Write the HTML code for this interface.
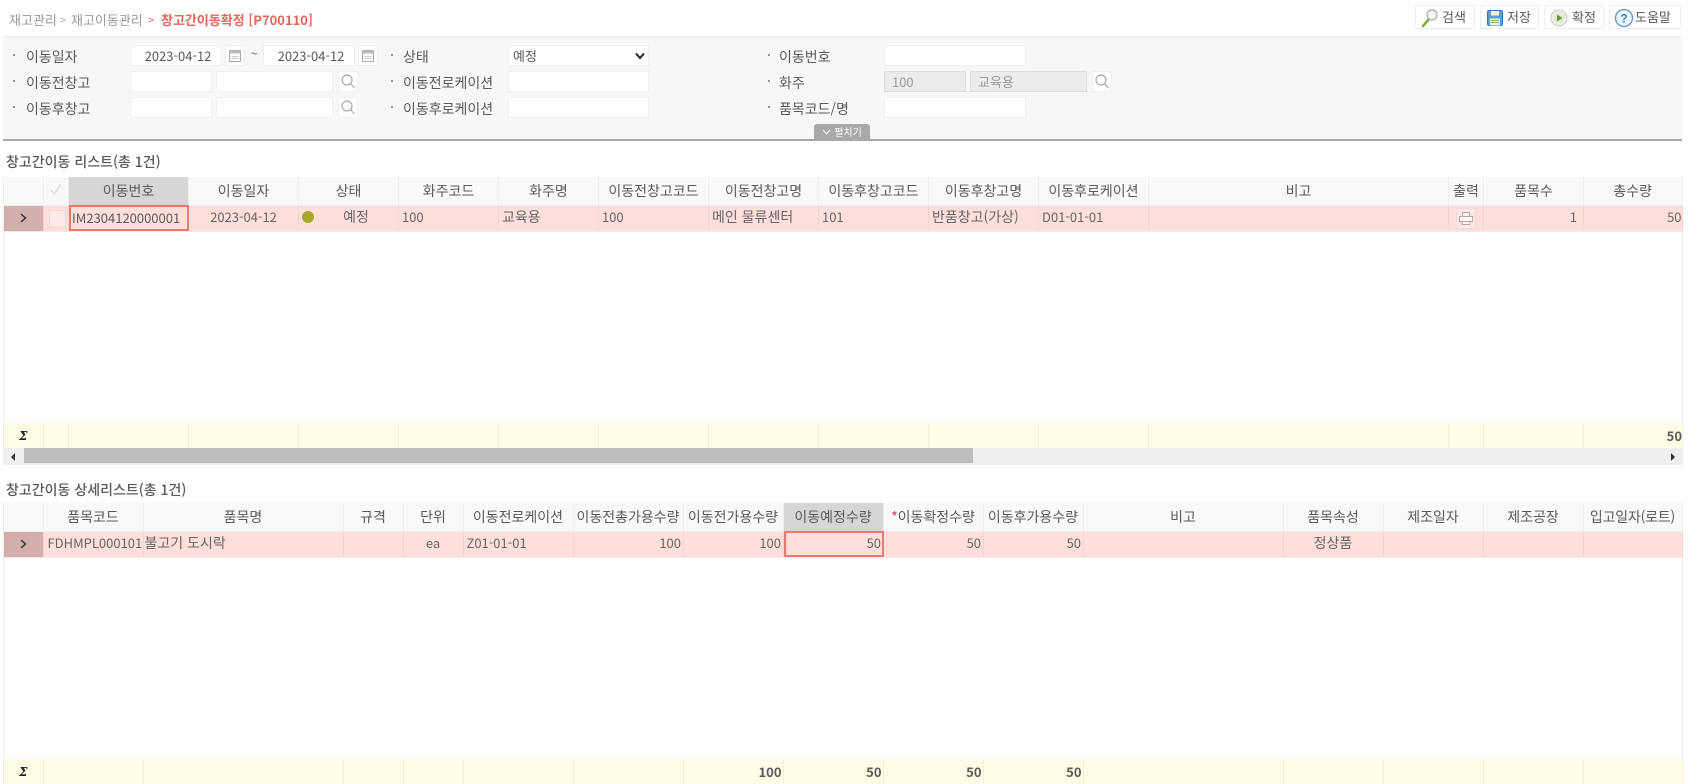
<!DOCTYPE html>
<html lang="ko"><head><meta charset="utf-8"><title>창고간이동확정</title>
<style>
html,body{margin:0;padding:0;width:1689px;height:784px;overflow:hidden;background:#fff}
body{font-family:"Noto Sans CJK KR","Liberation Sans",sans-serif;font-size:13px;color:#5a5a5a;position:relative}
.a{position:absolute;white-space:nowrap}
.bc{top:10px;font-size:13px;line-height:20px;color:#999}
.tb{top:5px;height:22px;border:1px solid #eee;background:#fff;box-sizing:content-box;font-size:13px;line-height:22px;color:#5a5a5a}
.tb svg{position:absolute;left:3px;top:1px}
.tb span{position:absolute;top:0}
.panel{left:3px;top:36px;width:1679px;height:103px;background:#f7f7f7;border-top:1px solid #eee;box-sizing:border-box}
.line{left:3px;top:139px;width:1679px;height:2px;background:#a8a8a8}
.lbl{font-size:14px;line-height:20px;color:#5a5a5a}
.dot{width:2px;height:2px;background:#777;border-radius:50%}
.in{background:#fff;border:1px solid #f0f0f0;box-sizing:border-box;font-size:13px;color:#5a5a5a;line-height:19px;text-align:center}
.dis{background:#ececec;border:1px solid #ddd;color:#999;text-align:left;padding-left:7px}
.btn{background:#fff;border:1px solid #f0f0f0;box-sizing:border-box}
.ttl{left:6px;font-size:14px;font-weight:500;line-height:20px;color:#5a5a5a}
table{position:absolute;border-collapse:collapse;table-layout:fixed;border-spacing:0}
td,th{padding:0 3px;overflow:hidden;white-space:nowrap;font-weight:400;box-sizing:border-box;border-right:1px solid #eee;font-size:13px}
th{background:#f9f9f9;color:#5a5a5a;text-align:center;height:28px;border-bottom:1px solid #eee;padding:0 1px;font-size:14px}
th.s{background:#d6d6d6}
.r td{background:#ffdfdc;color:#666;height:26px;border-right:1px solid #f8d2cf;border-bottom:1px solid #f2e9e8;font-size:13px;padding-bottom:3px}
.r td.k{font-size:14px;padding-bottom:2px}
.f td{background:#fffde4;height:25px;border-right:1px solid #f1f0dc;font-weight:700;font-size:13px;color:#5a5a5a;text-align:right;padding-right:1px}
.c{text-align:center}.rt{text-align:right}
.r td.rt{padding-right:1.500px}
td.h{background:#d2afac!important;text-align:center;padding:0!important}
td.sig{text-align:center;padding:0;font-style:italic;font-family:"DejaVu Serif",serif;font-weight:700;color:#222;font-size:12px}
.sel{border:2px solid #e57b6f;box-sizing:border-box}
.vl{width:1px;background:#eee}
</style></head><body>

<div class="a bc" style="left:9px">재고관리</div>
<div class="a bc" style="left:60px;font-size:11px;color:#aaa">&gt;</div>
<div class="a bc" style="left:71px">재고이동관리</div>
<div class="a bc" style="left:148px;font-size:11px;color:#e2685c">&gt;</div>
<div class="a bc" style="left:161px;color:#e2685c;font-weight:700">창고간이동확정 [P700110]</div>

<div class="a tb" style="left:1415px;width:58px"><svg width="22" height="22" viewBox="0 0 22 22"><path d="M4 19 L10 12" stroke="#7dae3a" stroke-width="2.500" stroke-linecap="round"/><circle cx="13" cy="8" r="5" fill="#f2f4f2" stroke="#a8b2a8" stroke-width="1.300"/></svg><span style="left:26px">검색</span></div>
<div class="a tb" style="left:1480px;width:57px"><svg width="22" height="22" viewBox="0 0 22 22"><rect x="3.500" y="3.500" width="15" height="15" rx="1.500" fill="#5f9bd8" stroke="#3d78b5"/><rect x="7" y="4" width="8" height="4.500" fill="#e8f1fa"/><rect x="6" y="11.500" width="10" height="7" fill="#eef4da"/><path d="M7 13.500h8M7 15.500h8" stroke="#8fb85a"/></svg><span style="left:26px">저장</span></div>
<div class="a tb" style="left:1544px;width:58px"><svg width="22" height="22" viewBox="0 0 22 22"><circle cx="11" cy="11" r="8" fill="#f0f0ea" stroke="#c8c8c0"/><circle cx="11" cy="11" r="5.500" fill="#e4ecd8"/><path d="M9 7.500 L14.500 11 L9 14.500Z" fill="#5c9e35"/></svg><span style="left:27px">확정</span></div>
<div class="a tb" style="left:1609px;width:70px"><svg width="22" height="22" viewBox="0 0 22 22"><circle cx="11" cy="11" r="8.500" fill="#eef5fb" stroke="#5a98d0" stroke-width="1.300"/><text x="11" y="15.500" font-size="12" font-weight="700" text-anchor="middle" fill="#3f7fbd" font-family="Liberation Sans, sans-serif">?</text></svg><span style="left:25px">도움말</span></div>

<div class="a panel"></div>
<div class="a line"></div>

<!-- labels -->
<div class="a dot" style="left:13px;top:54px"></div><div class="a lbl" style="left:26px;top:47px">이동일자</div>
<div class="a dot" style="left:13px;top:80px"></div><div class="a lbl" style="left:26px;top:73px">이동전창고</div>
<div class="a dot" style="left:13px;top:106px"></div><div class="a lbl" style="left:26px;top:99px">이동후창고</div>
<div class="a dot" style="left:391px;top:54px"></div><div class="a lbl" style="left:403px;top:47px">상태</div>
<div class="a dot" style="left:391px;top:80px"></div><div class="a lbl" style="left:403px;top:73px">이동전로케이션</div>
<div class="a dot" style="left:391px;top:106px"></div><div class="a lbl" style="left:403px;top:99px">이동후로케이션</div>
<div class="a dot" style="left:768px;top:54px"></div><div class="a lbl" style="left:779px;top:47px">이동번호</div>
<div class="a dot" style="left:768px;top:80px"></div><div class="a lbl" style="left:779px;top:73px">화주</div>
<div class="a dot" style="left:768px;top:106px"></div><div class="a lbl" style="left:779px;top:99px">품목코드/명</div>

<!-- row 1 -->
<div class="a in" style="left:130px;top:45px;width:92px;height:21px;padding-left:4px">2023-04-12</div>
<div class="a btn" style="left:225px;top:45px;width:20px;height:21px"><svg width="18" height="19" viewBox="0 0 18 19"><rect x="3.500" y="4.500" width="11" height="11" fill="#fff" stroke="#aaa"/><rect x="3.500" y="4.500" width="11" height="3" fill="#bbb"/><path d="M5.500 10.500h7M5.500 12.500h7" stroke="#ccc"/></svg></div>
<div class="a" style="left:251px;top:44px;font-size:12px;line-height:20px;color:#666">~</div>
<div class="a in" style="left:263px;top:45px;width:92px;height:21px;padding-left:4px">2023-04-12</div>
<div class="a btn" style="left:358px;top:45px;width:20px;height:21px"><svg width="18" height="19" viewBox="0 0 18 19"><rect x="3.500" y="4.500" width="11" height="11" fill="#fff" stroke="#aaa"/><rect x="3.500" y="4.500" width="11" height="3" fill="#bbb"/><path d="M5.500 10.500h7M5.500 12.500h7" stroke="#ccc"/></svg></div>
<div class="a in" style="left:508px;top:45px;width:141px;height:21px;text-align:left;padding-left:4px">예정<svg style="position:absolute;left:126px;top:6px" width="10" height="8" viewBox="0 0 10 8"><path d="M1 1.500 L5 6 L9 1.500" fill="none" stroke="#222" stroke-width="2"/></svg></div>
<div class="a in" style="left:884px;top:45px;width:142px;height:21px"></div>

<!-- row 2 -->
<div class="a in" style="left:130px;top:71px;width:82px;height:21px"></div>
<div class="a in" style="left:216px;top:71px;width:117px;height:21px"></div>
<div class="a btn" style="left:338px;top:71px;width:20px;height:21px"><svg width="18" height="19" viewBox="0 0 18 19"><circle cx="8" cy="8" r="5" fill="none" stroke="#aaa" stroke-width="1.200"/><path d="M11.500 11.500 L15.500 16" stroke="#aaa" stroke-width="1.200"/></svg></div>
<div class="a in" style="left:508px;top:71px;width:141px;height:21px"></div>
<div class="a in dis" style="left:884px;top:71px;width:82px;height:21px">100</div>
<div class="a in dis" style="left:970px;top:71px;width:117px;height:21px">교육용</div>
<div class="a btn" style="left:1092px;top:71px;width:20px;height:21px"><svg width="18" height="19" viewBox="0 0 18 19"><circle cx="8" cy="8" r="5" fill="none" stroke="#aaa" stroke-width="1.200"/><path d="M11.500 11.500 L15.500 16" stroke="#aaa" stroke-width="1.200"/></svg></div>

<!-- row 3 -->
<div class="a in" style="left:130px;top:97px;width:82px;height:21px"></div>
<div class="a in" style="left:216px;top:97px;width:117px;height:21px"></div>
<div class="a btn" style="left:338px;top:97px;width:20px;height:21px"><svg width="18" height="19" viewBox="0 0 18 19"><circle cx="8" cy="8" r="5" fill="none" stroke="#aaa" stroke-width="1.200"/><path d="M11.500 11.500 L15.500 16" stroke="#aaa" stroke-width="1.200"/></svg></div>
<div class="a in" style="left:508px;top:97px;width:141px;height:21px"></div>
<div class="a in" style="left:884px;top:97px;width:142px;height:21px"></div>

<div class="a" style="left:814px;top:124px;width:56px;height:15px;background:#a9a9a9;border-radius:3px 3px 0 0;color:#fff;font-size:10px;line-height:15px;text-align:center"><svg width="9" height="6" viewBox="0 0 9 6" style="margin-right:3px;vertical-align:1px"><path d="M1 1 L4.500 5 L8 1" fill="none" stroke="#fff"/></svg>펼치기</div>

<!-- grid 1 -->
<div class="a ttl" style="top:152px">창고간이동 리스트(총 1건)</div>
<div class="a vl" style="left:3px;top:177px;height:288px"></div>
<div class="a vl" style="left:1682px;top:177px;height:288px"></div>
<table style="left:4px;top:177px;width:1678px">
<colgroup><col style="width:39px"><col style="width:25.500px"><col style="width:120px"><col style="width:110px"><col style="width:100px"><col style="width:100px"><col style="width:100px"><col style="width:110px"><col style="width:110px"><col style="width:110px"><col style="width:110px"><col style="width:110px"><col style="width:300px"><col style="width:35px"><col style="width:100px"><col style="width:98.500px"></colgroup>
<tr><th></th><th><svg width="14" height="14" viewBox="0 0 14 14"><path d="M2 8 L5.500 12 L12 2" fill="none" stroke="#ddd" stroke-width="1.500"/></svg></th><th class="s">이동번호</th><th>이동일자</th><th>상태</th><th>화주코드</th><th>화주명</th><th>이동전창고코드</th><th>이동전창고명</th><th>이동후창고코드</th><th>이동후창고명</th><th>이동후로케이션</th><th>비고</th><th>출력</th><th>품목수</th><th>총수량</th></tr>
<tr class="r"><td class="h"><svg width="10" height="12" viewBox="0 0 10 12"><path d="M3 2 L7.500 6 L3 10" fill="none" stroke="#333" stroke-width="1.500"/></svg></td><td></td><td></td><td class="c">2023-04-12</td><td class="c k" style="padding-left:18px">예정</td><td>100</td><td class="k">교육용</td><td>100</td><td class="k">메인 물류센터</td><td>101</td><td class="k">반품창고(가상)</td><td>D01-01-01</td><td></td><td></td><td class="rt" style="padding-right:6px">1</td><td class="rt" style="padding-right:0">50</td></tr>
</table>
<div class="a" style="left:49px;top:210px;width:15px;height:16px;background:#ffe9e7;border:1px solid #f5d5d2"></div>
<div class="a sel" style="left:69px;top:205px;width:120px;height:26px;font-size:13px;line-height:22px;padding-left:1px;color:#5a5a5a">IM2304120000001</div>
<div class="a" style="left:302px;top:211px;width:12px;height:12px;background:#a6a82a;border-radius:50%"></div>
<div class="a" style="left:1456px;top:208px;width:20px;height:21px;border:1px solid #f4d8d5;background:#ffe9e7;box-sizing:border-box"><svg width="18" height="19" viewBox="0 0 18 19"><path d="M5.500 7.500V3.500h7v4M2.500 7.500h13v5h-13zM5 12.500v3h8v-3" fill="#fff5f4" stroke="#b5a5a3"/></svg></div>
<table style="left:4px;top:423px;width:1678px">
<colgroup><col style="width:39px"><col style="width:25.500px"><col style="width:120px"><col style="width:110px"><col style="width:100px"><col style="width:100px"><col style="width:100px"><col style="width:110px"><col style="width:110px"><col style="width:110px"><col style="width:110px"><col style="width:110px"><col style="width:300px"><col style="width:35px"><col style="width:100px"><col style="width:98.500px"></colgroup>
<tr class="f"><td class="sig" style="background:#fffde4">Σ</td><td></td><td></td><td></td><td></td><td></td><td></td><td></td><td></td><td></td><td></td><td></td><td></td><td></td><td></td><td style="padding-right:0;border-right:0">50</td></tr>
</table>
<div class="a" style="left:4px;top:448px;width:1678px;height:17px;background:#efefef"></div>
<div class="a" style="left:24px;top:448px;width:949px;height:15px;background:#bdbdbd"></div>
<div class="a" style="left:11px;top:453px;width:0;height:0;border:4px solid transparent;border-right:4px solid #333;border-left:0"></div>
<div class="a" style="left:1671px;top:453px;width:0;height:0;border:4px solid transparent;border-left:4px solid #333;border-right:0"></div>

<!-- grid 2 -->
<div class="a ttl" style="top:480px">창고간이동 상세리스트(총 1건)</div>
<div class="a vl" style="left:3px;top:503px;height:281px"></div>
<div class="a vl" style="left:1682px;top:503px;height:281px"></div>
<table style="left:4px;top:503px;width:1678px">
<colgroup><col style="width:39px"><col style="width:100px"><col style="width:200px"><col style="width:60px"><col style="width:60px"><col style="width:110px"><col style="width:110px"><col style="width:100px"><col style="width:100px"><col style="width:100px"><col style="width:100px"><col style="width:200px"><col style="width:100px"><col style="width:100px"><col style="width:100px"><col style="width:99px"></colgroup>
<tr><th></th><th>품목코드</th><th>품목명</th><th>규격</th><th>단위</th><th>이동전로케이션</th><th>이동전총가용수량</th><th>이동전가용수량</th><th class="s">이동예정수량</th><th><span style="color:#e33">*</span>이동확정수량</th><th>이동후가용수량</th><th>비고</th><th>품목속성</th><th>제조일자</th><th>제조공장</th><th style="letter-spacing:-.2px">입고일자(로트)</th></tr>
<tr class="r"><td class="h"><svg width="10" height="12" viewBox="0 0 10 12"><path d="M3 2 L7.500 6 L3 10" fill="none" stroke="#333" stroke-width="1.500"/></svg></td><td style="padding-left:4px;padding-right:0">FDHMPL000101(</td><td class="k" style="padding-left:1px">불고기 도시락</td><td></td><td class="c">ea</td><td>Z01-01-01</td><td class="rt">100</td><td class="rt">100</td><td></td><td class="rt">50</td><td class="rt">50</td><td></td><td class="c k">정상품</td><td></td><td></td><td></td></tr>
</table>
<div class="a sel" style="left:784px;top:531px;width:100px;height:26px;font-size:13px;line-height:20px;padding-right:1px;text-align:right;color:#666">50</div>
<table style="left:4px;top:759px;width:1678px">
<colgroup><col style="width:39px"><col style="width:100px"><col style="width:200px"><col style="width:60px"><col style="width:60px"><col style="width:110px"><col style="width:110px"><col style="width:100px"><col style="width:100px"><col style="width:100px"><col style="width:100px"><col style="width:200px"><col style="width:100px"><col style="width:100px"><col style="width:100px"><col style="width:99px"></colgroup>
<tr class="f"><td class="sig" style="background:#fffde4">Σ</td><td></td><td></td><td></td><td></td><td></td><td></td><td>100</td><td>50</td><td>50</td><td>50</td><td></td><td></td><td></td><td></td><td style="border-right:0"></td></tr>
</table>
</body></html>
